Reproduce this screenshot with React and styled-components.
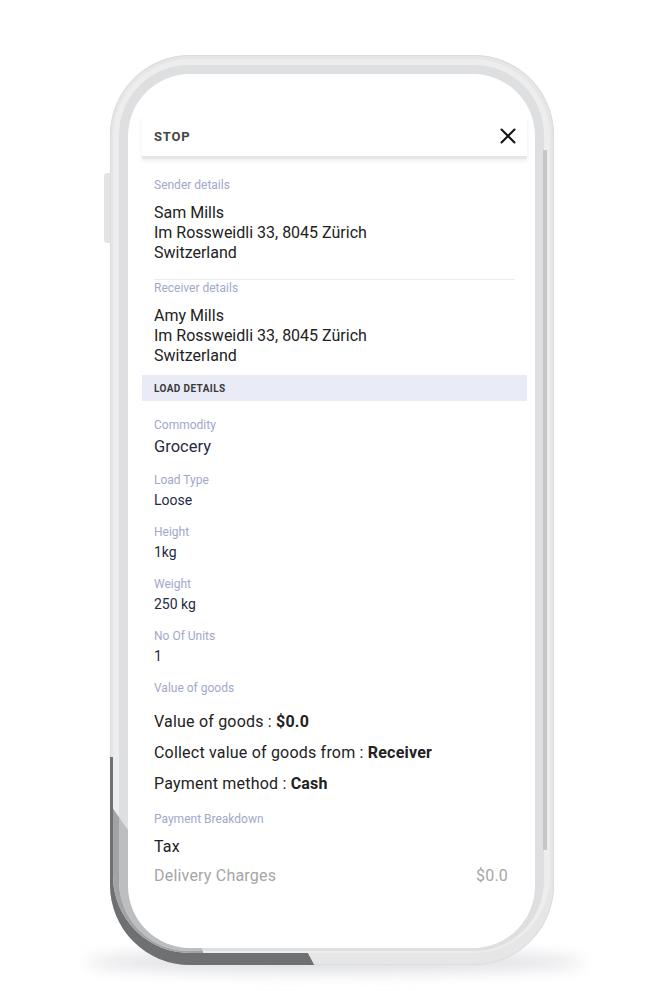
import styled, { createGlobalStyle } from "styled-components";

const GlobalStyle = createGlobalStyle`
  body {
    margin: 0;
    background: #fff;
    font-family: Roboto, "Liberation Sans", sans-serif;
  }
`;

const Page = styled.div`
  width: 670px;
  height: 991px;
  padding: 55px 0 0 110px;
  box-sizing: border-box;
  overflow: hidden;
`;

const Phone = styled.div`
  position: relative;
  width: 444px;
  height: 910px;
  padding: 19px 19px 17px 18px;
  box-sizing: border-box;
  display: flex;
`;

const FrameArt = styled.svg`
  position: absolute;
  left: -110px;
  top: -55px;
  width: 670px;
  height: 991px;
  z-index: 0;
`;

const Screen = styled.div`
  position: relative;
  z-index: 1;
  flex: 1;
  background: #fff;
  border-radius: 62px;
  overflow: hidden;
  padding: 42px 8px 0 14px;
  display: flex;
  flex-direction: column;
`;

const Header = styled.div`
  height: 40px;
  padding: 0 11px 0 12px;
  display: flex;
  align-items: center;
  justify-content: space-between;
  border-bottom: 3px solid #e6e6e6;
  box-shadow: 0 2px 4px rgba(0, 0, 0, 0.07);
`;

const Title = styled.span`
  font-size: 13px;
  font-weight: 700;
  color: #454545;
  letter-spacing: 0.8px;
`;

const Body = styled.div`
  padding: 19px 12px 0;
  display: flex;
  flex-direction: column;
`;

const Label = styled.div`
  font-size: 12px;
  line-height: 15px;
  color: #a2a7cb;
  margin-top: ${(p) => p.$top || 0}px;
`;

const Address = styled.div`
  margin-top: 10px;
  font-size: 16px;
  line-height: 20px;
  color: #222;
`;

const Divider = styled.div`
  height: 1px;
  background: #ececf0;
  margin: 16px 0 1px;
`;

const Band = styled.div`
  margin: 9px -12px 0;
  height: 26px;
  padding: 0 12px;
  background: #e9ecf6;
  display: flex;
  align-items: center;
  font-size: 10px;
  font-weight: 700;
  color: #3a3a3a;
  letter-spacing: 0.4px;
`;

const Field = styled.div`
  display: flex;
  flex-direction: column;
  margin-top: ${(p) => p.$top}px;
`;

const Value = styled.div`
  color: #262a45;
  font-size: ${(p) => (p.$big ? 16.5 : 14)}px;
  line-height: ${(p) => (p.$big ? 20 : 18)}px;
  margin-top: ${(p) => (p.$big ? 4 : 3)}px;
`;

const Rows = styled.div`
  margin-top: ${(p) => p.$top}px;
  display: flex;
  flex-direction: column;
`;

const Line = styled.div`
  display: flex;
  justify-content: space-between;
  padding-right: 7px;
  font-size: 16px;
  letter-spacing: 0.2px;
  line-height: ${(p) => p.$h}px;
  color: ${(p) => (p.$muted ? "#a6a6a6" : "#222")};

  b {
    font-weight: 700;
  }
`;

const CloseIcon = () => (
  <svg width="16" height="16" viewBox="0 0 16 16">
    <path d="M1.5 1.5 L14.5 14.5 M14.5 1.5 L1.5 14.5" stroke="#111" strokeWidth="2" strokeLinecap="round" />
  </svg>
);

const Frame = () => (
  <FrameArt viewBox="0 0 670 991">
    <defs>
      <clipPath id="dark">
        <polygon points="100,757 303,757 303,944 318,972 100,972" />
      </clipPath>
      <clipPath id="stripe">
        <polygon points="100,790 128,830 200,830 200,940 208,972 100,972" />
      </clipPath>
      <filter id="blur" x="-20%" y="-200%" width="140%" height="500%">
        <feGaussianBlur stdDeviation="8" />
      </filter>
    </defs>
    <ellipse cx="335" cy="962" rx="250" ry="10" fill="#dcdde2" filter="url(#blur)" />
    <rect x="104" y="173" width="10" height="70" rx="3" fill="#e4e4e5" />
    <rect x="110" y="55" width="444" height="910" rx="80" fill="#e6e6e7" />
    <rect x="110.5" y="55.5" width="443" height="909" rx="79.5" fill="none" stroke="#dcdcdd" />
    <g clipPath="url(#dark)">
      <rect x="110" y="55" width="444" height="910" rx="80" fill="#6e7072" />
    </g>
    <rect x="113" y="59" width="437" height="894" rx="77" fill="#ededee" />
    <g clipPath="url(#stripe)">
      <rect x="113" y="59" width="437" height="894" rx="77" fill="#a2a3a4" />
    </g>
    <rect x="119" y="65" width="425" height="886" rx="70" fill="#dedfe0" />
    <g clipPath="url(#stripe)">
      <rect x="119" y="65" width="425" height="886" rx="70" fill="#bdbebf" />
    </g>
    <rect x="543" y="150" width="4" height="700" fill="#c6c6c7" />
  </FrameArt>
);

export default function App() {
  return (
    <Page>
      <GlobalStyle />
      <Phone>
        <Frame />
        <Screen>
          <Header>
            <Title>STOP</Title>
            <CloseIcon />
          </Header>
          <Body>
            <Label>Sender details</Label>
            <Address>
              Sam Mills
              <br />
              Im Rossweidli 33, 8045 Zürich
              <br />
              Switzerland
            </Address>
            <Divider />
            <Label>Receiver details</Label>
            <Address>
              Amy Mills
              <br />
              Im Rossweidli 33, 8045 Zürich
              <br />
              Switzerland
            </Address>
            <Band>LOAD DETAILS</Band>
            <Field $top={17}>
              <Label>Commodity</Label>
              <Value $big>Grocery</Value>
            </Field>
            <Field $top={16}>
              <Label>Load Type</Label>
              <Value>Loose</Value>
            </Field>
            <Field $top={16}>
              <Label>Height</Label>
              <Value>1kg</Value>
            </Field>
            <Field $top={16}>
              <Label>Weight</Label>
              <Value>250 kg</Value>
            </Field>
            <Field $top={16}>
              <Label>No Of Units</Label>
              <Value>1</Value>
            </Field>
            <Label $top={16}>Value of goods</Label>
            <Rows $top={10}>
              <Line $h={31}>
                <span>
                  Value of goods : <b>$0.0</b>
                </span>
              </Line>
              <Line $h={31}>
                <span>
                  Collect value of goods from : <b>Receiver</b>
                </span>
              </Line>
              <Line $h={31}>
                <span>
                  Payment method : <b>Cash</b>
                </span>
              </Line>
            </Rows>
            <Label $top={13}>Payment Breakdown</Label>
            <Rows $top={5}>
              <Line $h={29}>
                <span>Tax</span>
              </Line>
              <Line $h={29} $muted>
                <span>Delivery Charges</span>
                <span>$0.0</span>
              </Line>
            </Rows>
          </Body>
        </Screen>
      </Phone>
    </Page>
  );
}
